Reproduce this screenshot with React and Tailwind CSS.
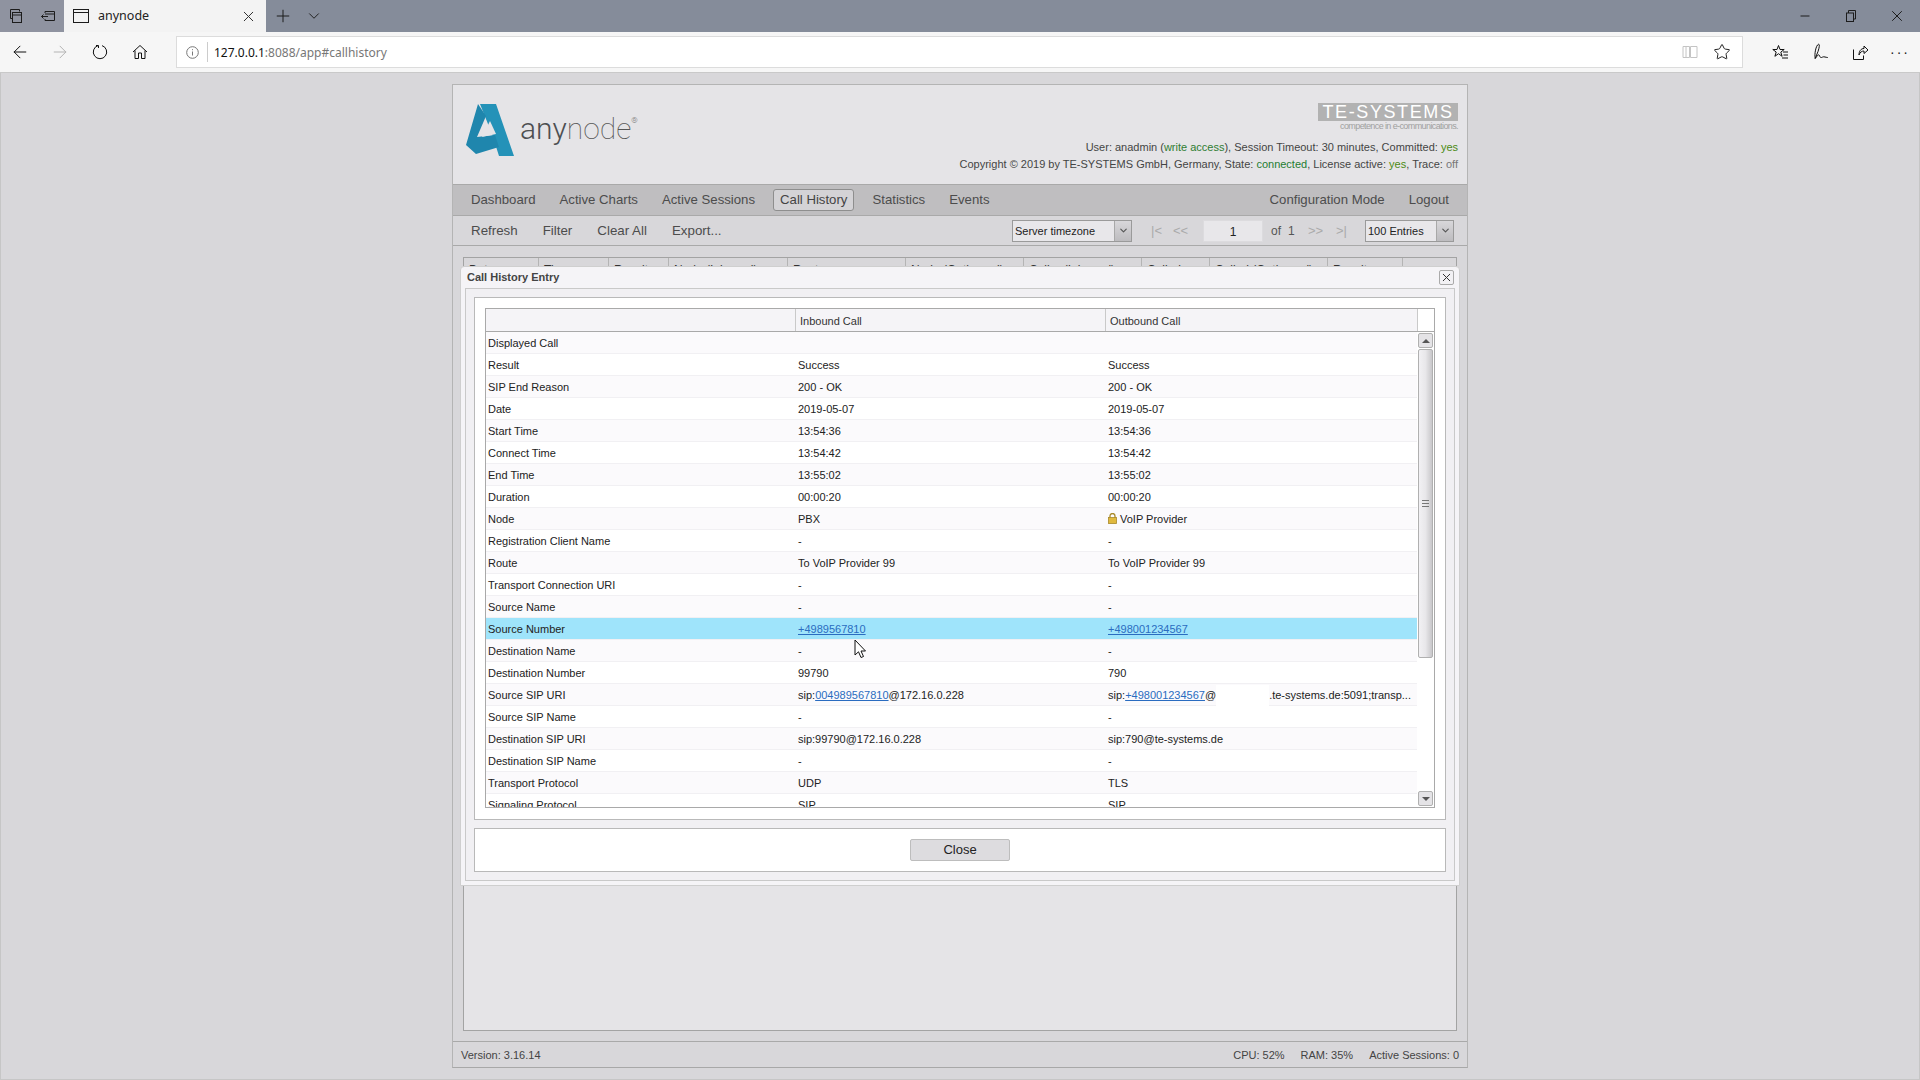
import React from "react";
import { ChevronDown, Plus, X, Minus, ArrowLeft, ArrowRight, Star } from "lucide-react";

const Thin = ({ className, children, size = 16, vb = 16 }) => (
  <svg width={size} height={size} viewBox={`0 0 ${vb} ${vb}`} fill="none" stroke="currentColor" strokeWidth="1" className={className}>
    {children}
  </svg>
);

const rows = [
  ["Displayed Call", "", ""],
  ["Result", "Success", "Success"],
  ["SIP End Reason", "200 - OK", "200 - OK"],
  ["Date", "2019-05-07", "2019-05-07"],
  ["Start Time", "13:54:36", "13:54:36"],
  ["Connect Time", "13:54:42", "13:54:42"],
  ["End Time", "13:55:02", "13:55:02"],
  ["Duration", "00:00:20", "00:00:20"],
  ["Node", "PBX", "lock"],
  ["Registration Client Name", "-", "-"],
  ["Route", "To VoIP Provider 99", "To VoIP Provider 99"],
  ["Transport Connection URI", "-", "-"],
  ["Source Name", "-", "-"],
  ["Source Number", "link1", "link2"],
  ["Destination Name", "-", "-"],
  ["Destination Number", "99790", "790"],
  ["Source SIP URI", "sip1", "sip2"],
  ["Source SIP Name", "-", "-"],
  ["Destination SIP URI", "sip:99790@172.16.0.228", "sip:790@te-systems.de"],
  ["Destination SIP Name", "-", "-"],
  ["Transport Protocol", "UDP", "TLS"],
  ["Signaling Protocol", "SIP", "SIP"],
];

const backColumns = [
  ["Date", "w-[75px]"],
  ["Time", "w-[70px]"],
  ["Result", "w-[60px]"],
  ["Node (Inbound)", "w-[119px]"],
  ["Route", "w-[118px]"],
  ["Node (Outbound)", "w-[118px]"],
  ["Caller (Inbound)", "w-[118px]"],
  ["Called", "w-[68px]"],
  ["Called (Outbound)", "w-[118px]"],
  ["Result", "w-[75px]"],
];

const Link = ({ children }) => <span className="text-[#2a6cc0] underline">{children}</span>;

const renderCell = (v) => {
  if (v === "lock") {
    return (
      <span className="flex items-center gap-[3px]">
        <svg width="9" height="11" viewBox="0 0 9 11" className="-mt-[2px]">
          <path d="M2 5V3a2.5 2.5 0 0 1 5 0v2" fill="none" stroke="#a8892a" strokeWidth="1.3" />
          <rect x="0.5" y="4.5" width="8" height="6" fill="#e0b93e" stroke="#a8892a" strokeWidth="0.8" />
        </svg>
        VoIP Provider
      </span>
    );
  }
  if (v === "link1") return <Link>+4989567810</Link>;
  if (v === "link2") return <Link>+498001234567</Link>;
  if (v === "sip1") return <span>sip:<Link>004989567810</Link>@172.16.0.228</span>;
  if (v === "sip2") {
    return (
      <span className="flex items-center">
        <span>sip:<Link>+498001234567</Link>@</span>
        <span className="w-[53px] h-[21px] bg-white" />
        <span>.te-systems.de:5091;transp...</span>
      </span>
    );
  }
  return v;
};

const NavItem = ({ children, active }) => (
  <span className={active ? "px-[6px] h-[22px] leading-[20px] border border-[#8e8e8e] rounded-[3px] bg-[#d4d3d6] text-[#444]" : "px-[6px] text-[#4c4c4c]"}>
    {children}
  </span>
);

const Select = ({ label, className }) => (
  <div className={`h-[22px] flex border border-[#9a9a9a] bg-[#e8e7ea] ${className}`}>
    <span className="flex-1 pl-[2px] leading-[20px] text-[11px] text-[#222] whitespace-nowrap">{label}</span>
    <span className="w-[17px] flex items-center justify-center border-l border-[#a8a8a8] bg-gradient-to-b from-[#d8d7da] to-[#bdbcbf]">
      <ChevronDown size={11} strokeWidth={2.5} className="text-[#555]" />
    </span>
  </div>
);

export default function App() {
  return (
    <div className="w-[1920px] h-[1080px] overflow-hidden flex flex-col bg-[#d8d7da] font-['Liberation_Sans',Arial,sans-serif] text-[11px] text-[#222]">
      {/* browser tab strip */}
      <div className="h-8 flex-none flex bg-[#858c9a] text-[#1c1c1c]">
        <div className="w-8 flex items-center justify-center bg-[#8f93a0]">
          <Thin size={16}>
            <path d="M2.5 1.5h9v2M2.5 1.5v9h2" />
            <rect x="4.5" y="4.5" width="9" height="10" />
            <path d="M4.5 7h9" />
          </Thin>
        </div>
        <div className="w-8 flex items-center justify-center bg-[#8f93a0]">
          <Thin size={16}>
            <path d="M5 5V3.5h9.5v9H5V11M5 6h9.5M8 8.5H1.5M3.5 6.5l-2 2 2 2" />
          </Thin>
        </div>
        <div className="w-[202px] flex items-center bg-[#f3f3f3] pl-[9px] pr-[9px]">
          <Thin size={16}>
            <rect x="0.5" y="1.5" width="15" height="13" />
            <path d="M0.5 4.5h15" />
          </Thin>
          <span className="ml-[9px] flex-1 font-['Noto_Sans',sans-serif] text-[12.5px] text-[#222]">anynode</span>
          <X size={17} strokeWidth={1} absoluteStrokeWidth className="text-[#333]" />
        </div>
        <div className="w-8 flex items-center justify-center pl-[1px]">
          <Plus size={20} strokeWidth={1} absoluteStrokeWidth />
        </div>
        <div className="w-8 flex items-center justify-center">
          <ChevronDown size={18} strokeWidth={1} absoluteStrokeWidth className="text-[#222]" />
        </div>
        <div className="flex-1" />
        <div className="w-[46px] flex items-center justify-center"><Minus size={14} strokeWidth={1} absoluteStrokeWidth /></div>
        <div className="w-[46px] flex items-center justify-center">
          <Thin size={12} vb={12}>
            <rect x="1.5" y="3" width="7" height="8.5" />
            <path d="M3.5 3V0.5h7v8.5H8.5" />
          </Thin>
        </div>
        <div className="w-[46px] flex items-center justify-center"><X size={18} strokeWidth={1} absoluteStrokeWidth /></div>
      </div>

      {/* browser toolbar */}
      <div className="h-[41px] flex-none flex items-center bg-[#f6f6f6] border-b border-[#c9c9c9] text-[#111]">
        <div className="w-10 flex justify-center"><ArrowLeft size={20} strokeWidth={1} absoluteStrokeWidth /></div>
        <div className="w-10 flex justify-center"><ArrowRight size={20} strokeWidth={1} absoluteStrokeWidth className="text-[#b4b4b4]" /></div>
        <div className="w-10 flex justify-center">
          <Thin size={16}>
            <path d="M6 1.6A6.7 6.7 0 1 0 10 1.6" />
            <path d="M6.5 4V1.500H4" />
          </Thin>
        </div>
        <div className="w-10 flex justify-center">
          <Thin size={16}>
            <path d="M1 8l7-6.500L15 8M3 6.500V14.500h3.500V9h3v5.500H13V6.500" />
          </Thin>
        </div>
        <div className="w-[1567px] ml-4 h-8 flex items-center bg-white border border-[#dcdcdc]">
          <div className="w-[30px] flex justify-center text-[#777]">
            <Thin size={13} vb={13}>
              <circle cx="6.5" cy="6.5" r="5.8" />
              <path d="M6.5 5.500v4M6.5 3.200v1" />
            </Thin>
          </div>
          <span className="h-[20px] border-l border-[#ccc]" />
          <span className="ml-[6px] pt-[1px] flex-1 font-['Noto_Sans',sans-serif] text-[12px] text-[#777]">
            <span className="text-[#111]">127.0.0.1</span>:8088/app#callhistory
          </span>
          <div className="mr-[15px] text-[#c4c4c4]">
            <Thin size={16}>
              <path d="M1 2.500h6.500v11H1zM8.500 2.500H15v11H8.500zM4 2.500v11" />
            </Thin>
          </div>
          <Star size={18} strokeWidth={1} absoluteStrokeWidth className="mr-[11px] text-[#222]" />
        </div>
        <div className="w-[17px]" />
        <div className="w-10 flex justify-center">
          <Thin size={17} vb={17}>
            <path d="M6.500 1.500l1.500 4h4.200l-3.400 2.600 1.300 4.200-3.600-2.600-3.600 2.600L4.200 8 .8 5.500H5z" />
            <path d="M11 8h5M11.500 11h4.500M10 14h6" />
          </Thin>
        </div>
        <div className="w-10 flex justify-center">
          <Thin size={18} vb={18}>
            <path d="M7.500 1.200C8.800 1.200 8.500 4 7 8.500L4.200 15.500C3.300 11 4.800 2.500 7.500 1.200z" />
            <path d="M4.200 15.500C6 13.500 7 11 8 12s1 3 2.500 2.500 1.500-1 3.500-.5 2.500.5 3 .5" />
          </Thin>
        </div>
        <div className="w-10 flex justify-center">
          <Thin size={17} vb={17}>
            <path d="M1.500 5.500v10h10v-4M7 11c0-4 2-6.500 5-6.500V2l4 4-4 3.500V7C10 7 8 8 7 11z" />
          </Thin>
        </div>
        <div className="w-10 flex justify-center text-[14px] leading-none tracking-[2px] text-[#222]">···</div>
      </div>

      {/* page */}
      <div className="flex-1 pt-[11px] border-x border-[#c6c6c6] border-b">
        <div className="relative w-[1016px] h-[984px] mx-auto flex flex-col border border-[#b4b4b4] border-b-[#a8a8a8] bg-[#e5e4e7]">
          {/* header */}
          <div className="h-[99px] flex-none flex justify-between pl-[13px] pr-[9px]">
            <div className="flex items-start pt-[19px]">
              <svg width="50" height="54" viewBox="0 0 50 54">
                <path d="M12 0H30L48 52H33L26 30L14 0Z" fill="#2492b8" />
                <path d="M12 0L0 41L10 50L33 43L29 31L11 33L20 12Z" fill="#1f86ad" />
                <path d="M24 17L30 30L16 33Z" fill="#e5e4e7" />
              </svg>
              <div className="ml-[4px] mt-[7px] font-['Roboto',sans-serif] text-[30px] leading-[36px] font-light text-[#4d4f52]">
                any<span className="font-thin text-[#555]">node</span>
                <span className="align-top text-[8px] leading-[20px] text-[#666]">®</span>
              </div>
            </div>
            <div className="flex flex-col items-end pt-[18px]">
              <div className="w-[140px] h-[18px] bg-[#b2b2b2] text-white text-[18px] leading-[18px] text-center tracking-[1.6px] font-['Liberation_Sans',sans-serif]">TE-SYSTEMS</div>
              <div className="h-[10px] text-[9px] leading-[10px] text-[#a0a0a0] tracking-[-0.6px]">competence in e-communications.</div>
              <div className="mt-[8px] h-[17px] leading-[17px] text-[#444] whitespace-nowrap">
                User: anadmin (<span className="text-[#2f7d32]">write access</span>), Session Timeout: 30 minutes, Committed: <span className="text-[#4a8a12]">yes</span>
              </div>
              <div className="h-[17px] leading-[17px] text-[#444] whitespace-nowrap">
                Copyright © 2019 by TE-SYSTEMS GmbH, Germany, State: <span className="text-[#1e7d32]">connected</span>, License active: <span className="text-[#4a8a12]">yes</span>, Trace: <span className="text-[#777]">off</span>
              </div>
            </div>
          </div>

          {/* main menu */}
          <div className="h-[32px] flex-none flex items-center justify-between pl-3 pr-3 bg-[#bfbec0] border-y border-[#a9a9a9] text-[13.2px]">
            <div className="flex items-center gap-3">
              <NavItem>Dashboard</NavItem>
              <NavItem>Active Charts</NavItem>
              <NavItem>Active Sessions</NavItem>
              <NavItem active>Call History</NavItem>
              <NavItem>Statistics</NavItem>
              <NavItem>Events</NavItem>
            </div>
            <div className="flex items-center gap-3">
              <NavItem>Configuration Mode</NavItem>
              <NavItem>Logout</NavItem>
            </div>
          </div>

          {/* toolbar */}
          <div className="h-[30px] flex-none flex items-center justify-between pl-3 pr-[13px] bg-[#d8d7da] border-b border-[#a9a9a9] text-[13.33px]">
            <div className="flex items-center gap-[13px]">
              <NavItem>Refresh</NavItem>
              <NavItem>Filter</NavItem>
              <NavItem>Clear All</NavItem>
              <NavItem>Export...</NavItem>
            </div>
            <div className="flex items-center text-[12px] text-[#555]">
              <Select label="Server timezone" className="w-[120px]" />
              <span className="ml-[19px] w-[22px] text-[#aaa] text-[13px]">|&lt;</span>
              <span className="w-[30px] text-[#aaa] text-[13px]">&lt;&lt;</span>
              <div className="w-[60px] h-[22px] leading-[22px] text-center text-[#222] bg-[#e8e7ea] border border-[#dcdbde]">1</div>
              <span className="ml-[8px] w-[17px]">of</span>
              <span className="w-[20px]">1</span>
              <span className="w-[28px] text-[#aaa] text-[13px]">&gt;&gt;</span>
              <span className="w-[29px] text-[#aaa] text-[13px]">&gt;|</span>
              <Select label="100 Entries" className="w-[89px]" />
            </div>
          </div>

          {/* history list behind the dialog */}
          <div className="flex-1 px-[10px] pt-[11px] pb-[10px] bg-[#d8d7da]">
            <div className="h-full border border-[#a3a3a3] bg-[#e5e4e7]">
              <div className="flex h-[24px] bg-[#d8d7da] border-b border-[#a3a3a3] text-[12px] leading-[14px] text-[#333]">
                {backColumns.map(([name, w], i) => (
                  <div key={i} className={`${w} pl-[5px] pt-[5px] border-r border-[#b4b4b4] whitespace-nowrap`}>{name}</div>
                ))}
              </div>
            </div>
          </div>

          {/* footer */}
          <div className="h-[26px] flex-none flex items-center justify-between px-2 pt-[1px] bg-[#d8d7da] border-t border-[#a9a9a9] text-[#444]">
            <span>Version: 3.16.14</span>
            <div className="flex gap-4">
              <span>CPU: 52%</span>
              <span>RAM: 35%</span>
              <span>Active Sessions: 0</span>
            </div>
          </div>

          {/* call history entry dialog */}
          <div className="absolute left-[7px] top-[181px] w-[1000px] h-[620px] flex flex-col bg-[#f5f4f7] border border-[#cfcfcf] rounded-t-[4px] px-1 pb-1">
            <div className="h-[21px] flex-none flex items-center justify-between pl-1 pr-[1px]">
              <span className="font-bold text-[#444] text-[11px] -ml-[2px]">Call History Entry</span>
              <span className="w-[15px] h-[15px] flex items-center justify-center border border-[#aaa] rounded-[2px] bg-[#f2f1f4]">
                <X size={13} strokeWidth={1} absoluteStrokeWidth className="text-[#333]" />
              </span>
            </div>
            <div className="flex-1 flex flex-col gap-[8px] p-2 bg-[#f1f0f3] border border-[#c9c9c9]">
              <div className="flex-1 bg-white border border-[#b9b9b9] p-[10px]">
                <div className="w-[950px] h-[500px] flex flex-col border border-[#a9a9a9] overflow-hidden">
                  <div className="h-[23px] flex-none flex border-b border-[#a9a9a9]">
                    <div className="w-[310px] bg-[#f5f4f7] border-r border-[#c9c9c9]" />
                    <div className="w-[310px] bg-[#f5f4f7] border-r border-[#c9c9c9] pl-[4px] leading-[24px] text-[#333]">Inbound Call</div>
                    <div className="w-[311px] bg-[#f5f4f7] pl-[4px] leading-[24px] text-[#333]">Outbound Call</div>
                    <div className="flex-1 bg-white border-l border-[#c9c9c9]" />
                  </div>
                  <div className="flex-1 flex min-h-0">
                    <div className="w-[931px] overflow-hidden">
                      {rows.map((r, i) => (
                        <div
                          key={r[0]}
                          className={`h-[22px] flex leading-[23px] border-b border-[#f1f0f3] ${r[0] === "Source Number" ? "bg-[#9fe4fb]" : i % 2 === 0 ? "bg-[#fbfafc]" : "bg-white"}`}
                        >
                          <div className="w-[310px] pl-[2px] whitespace-nowrap">{r[0]}</div>
                          <div className="w-[309px] pl-[2px] whitespace-nowrap">{renderCell(r[1])}</div>
                          <div className="w-[312px] pl-[3px] whitespace-nowrap">{renderCell(r[2])}</div>
                        </div>
                      ))}
                    </div>
                    {/* scrollbar */}
                    <div className="flex-1 flex flex-col items-center pt-[1px] pb-[1px] bg-white">
                      <div className="w-[15px] h-[15px] flex items-center justify-center border border-[#b0b0b0] rounded-[2px] bg-[#e4e3e6]">
                        <span className="w-0 h-0 border-x-[4px] border-x-transparent border-b-[4px] border-b-[#555]" />
                      </div>
                      <div className="mt-[1px] w-[15px] h-[309px] flex items-center justify-center border border-[#b0b0b0] rounded-[2px] bg-gradient-to-r from-[#f2f1f4] via-[#e8e7ea] to-[#c8c7ca]">
                        <div className="w-[7px] h-[7px] border-y border-[#777] flex items-center">
                          <div className="w-full border-t border-[#777]" />
                        </div>
                      </div>
                      <div className="flex-1" />
                      <div className="w-[15px] h-[15px] flex items-center justify-center border border-[#b0b0b0] rounded-[2px] bg-[#e4e3e6]">
                        <span className="w-0 h-0 border-x-[4px] border-x-transparent border-t-[4px] border-t-[#555]" />
                      </div>
                    </div>
                  </div>
                </div>
              </div>
              <div className="h-[44px] flex-none flex items-center justify-center bg-white border border-[#b9b9b9]">
                <button className="w-[100px] h-[22px] bg-[#dddcdf] border border-[#bdbdbd] rounded-[2px] text-[13px] text-[#222]">Close</button>
              </div>
            </div>
          </div>

          {/* mouse pointer */}
          <svg className="absolute left-[401px] top-[554px]" width="13" height="20" viewBox="0 0 13 20">
            <path d="M1 1V16L4.500 12.800L7 18.500L9.500 17.500L7 12H11.500Z" fill="#fff" stroke="#111" strokeWidth="1" />
          </svg>
        </div>
      </div>
    </div>
  );
}
